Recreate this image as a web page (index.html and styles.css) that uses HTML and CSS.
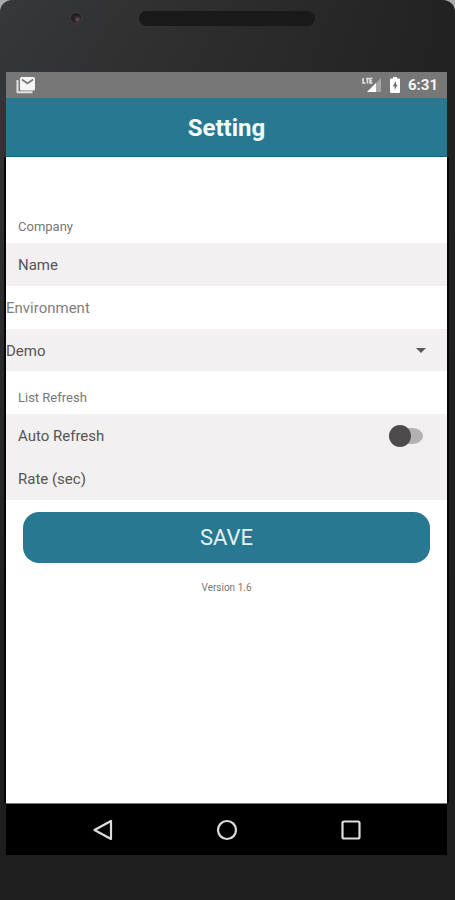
FILE: index.html
```html
<!DOCTYPE html>
<html lang="en">
<head>
<meta charset="utf-8">
<meta name="viewport" content="width=device-width, initial-scale=1">
<title>Setting</title>
<link rel="stylesheet" href="styles.css">
</head>
<body>
<div class="phone">
  <div class="bezel">
    <span class="camera"></span>
    <span class="speaker"></span>
  </div>
  <div class="status">
    <svg class="mail-icon" width="20" height="18" viewBox="0 0 20 18" aria-hidden="true">
      <path d="M1.500 4v12.200h15" fill="none" stroke="#e4e4e4" stroke-width="2" stroke-linejoin="round"/>
      <rect x="4" y="1" width="15" height="13.500" rx="1.500" fill="#f6f6f6"/>
      <path d="M6 3.500l5.500 4 5.500-4" fill="none" stroke="#777" stroke-width="1.600"/>
    </svg>
    <div class="status-right">
      <svg width="20" height="16" viewBox="0 0 20 16" aria-hidden="true">
        <path d="M19 1v14H5z" fill="#a5a5a5"/>
        <path d="M14 6v9H5z" fill="#fff"/>
        <path d="M1 1v5h2.500M4 1.500h3M5.500 1.500V6.500M10.500 1.500H8v4.500h2.500M8 3.700h2" fill="none" stroke="#e2e2e2" stroke-width="1.500"/>
      </svg>
      <svg width="10" height="16" viewBox="0 0 10 16" aria-hidden="true">
        <path d="M3 0h4v1.500h2q1 0 1 1V15q0 1-1 1H1q-1 0-1-1V2.500q0-1 1-1h2z" fill="#fff"/>
        <path d="M6 4L2.800 9.200h1.900V13L7.600 7.800H6z" fill="#6b6b6b"/>
      </svg>
      <span class="clock">6:31</span>
    </div>
  </div>
  <main class="screen">
    <header class="header"><h1>Setting</h1></header>
    <form class="form">
      <h2 class="caption">Company</h2>
      <div class="row">
        <label for="name">Name</label>
        <input class="field" id="name" type="text">
      </div>
      <label class="select-label" for="environment">Environment</label>
      <div class="select-row">
        <select id="environment"><option>Demo</option></select>
        <svg class="arrow" width="10" height="5" viewBox="0 0 10 5" aria-hidden="true"><path d="M0 0h10L5 5z" fill="#5a5a5a"/></svg>
      </div>
      <h2 class="caption">List Refresh</h2>
      <div class="row">
        <label for="auto">Auto Refresh</label>
        <input class="switch" id="auto" type="checkbox" role="switch">
      </div>
      <div class="row">
        <label for="rate">Rate (sec)</label>
        <input class="field" id="rate" type="text" inputmode="numeric">
      </div>
      <button class="save" type="button">SAVE</button>
      <p class="version">Version 1.6</p>
    </form>
  </main>
  <nav class="nav">
    <button type="button" aria-label="Back">
      <svg width="22" height="22" viewBox="0 0 22 22"><path d="M19 2v18L2.500 11z" fill="none" stroke="#ddd" stroke-width="2.200" stroke-linejoin="round"/></svg>
    </button>
    <button type="button" aria-label="Home">
      <svg width="22" height="22" viewBox="0 0 22 22"><circle cx="11" cy="11" r="9" fill="none" stroke="#ddd" stroke-width="2.200"/></svg>
    </button>
    <button type="button" aria-label="Recent apps">
      <svg width="22" height="22" viewBox="0 0 22 22"><rect x="2.500" y="2.500" width="17" height="17" rx="1.500" fill="none" stroke="#ddd" stroke-width="2.200"/></svg>
    </button>
  </nav>
</div>
</body>
</html>
```
FILE: styles.css
```css
* {
  box-sizing: border-box;
}

body {
  margin: 0;
  background: #aaa;
  font-family: Roboto, "Liberation Sans", sans-serif;
  color: #555;
}

.phone {
  display: flex;
  flex-direction: column;
  min-height: 100vh;
  padding: 0 8px 45px 6px;
  border-radius: 12px 12px 0 0;
  background:
    linear-gradient(#0000 0, #1e1e1e 700px),
    linear-gradient(90deg, #37383a, #2d2d2d 50%, #222);
}

.bezel {
  display: grid;
  grid-template-columns: 1fr 176px 1fr;
  align-items: center;
  height: 72px;
  padding-bottom: 36px;
}

.camera {
  width: 14px;
  height: 14px;
  margin-left: 8px;
  justify-self: center;
  border: 2px solid #3a3839;
  border-radius: 50%;
  background: radial-gradient(circle at 65% 65%, #65505b, #211d20 45%);
}

.speaker {
  height: 15px;
  border-radius: 8px;
  background: #191919;
}

.status {
  display: flex;
  align-items: center;
  justify-content: space-between;
  height: 26px;
  padding: 0 9px 0 10px;
  background: #777;
}

.status-right {
  display: flex;
  align-items: center;
  gap: 8px;
}

.clock {
  font-size: 15px;
  font-weight: 700;
  line-height: 26px;
  color: #f4f4f4;
}

.screen {
  display: flex;
  flex: 1;
  flex-direction: column;
  background: #fff;
  border-bottom: 1px solid #777;
}

.header {
  background: #287891;
  border-bottom: 1px solid #126580;
}

h1 {
  margin: 0;
  padding-top: 2px;
  font-size: 24px;
  font-weight: 700;
  line-height: 56px;
  text-align: center;
  color: #f4fbfd;
}

.form {
  display: flex;
  flex: 1;
  flex-direction: column;
  padding-top: 43px;
  box-shadow: -2px 0 #050505, 2px 0 #050505;
}

.caption {
  height: 43px;
  margin: 0;
  padding: 17px 12px 0;
  font-size: 13px;
  font-weight: 400;
  line-height: 20px;
  color: #777;
}

.row {
  display: flex;
  align-items: center;
  gap: 16px;
  height: 43px;
  padding: 0 24px 0 12px;
  background: #f2f0f1;
  font-size: 15px;
}

.row label,
.select-label {
  padding-top: 1px;
  line-height: 42px;
}

.field {
  flex: 1;
  min-width: 0;
  border: 0;
  outline: 0;
  background: none;
  font: inherit;
  color: inherit;
}

.select-label {
  font-size: 15px;
  color: #808080;
}

.select-row {
  display: grid;
  align-items: center;
  height: 42px;
  background: #f2f0f1;
}

.select-row > * {
  grid-area: 1 / 1;
}

select {
  width: 100%;
  height: 42px;
  padding: 2px 0 0;
  border: 0;
  appearance: none;
  background: none;
  font: inherit;
  font-size: 15px;
  color: #555;
}

.arrow {
  justify-self: end;
  margin-right: 21px;
  pointer-events: none;
}

.switch {
  display: flex;
  align-items: center;
  width: 34px;
  height: 22px;
  margin: 0 0 0 auto;
  padding: 3px 0;
  appearance: none;
  border-radius: 11px;
  background: #b3b1b2 content-box;
}

.switch::before {
  content: "";
  flex: none;
  width: 22px;
  height: 22px;
  border-radius: 50%;
  background: #4d4a4c;
}

.switch:checked::before {
  margin-left: 12px;
}

.save {
  height: 51px;
  margin: 12px 17px 0;
  border: 0;
  border-radius: 16px;
  background: #287891;
  font: inherit;
  font-size: 22px;
  color: #e4f1f5;
}

.version {
  margin: 15px 0;
  font-size: 10px;
  line-height: 20px;
  text-align: center;
  color: #777;
}

.nav {
  display: flex;
  justify-content: center;
  gap: 102px;
  height: 51px;
  background: #000;
}

.nav button {
  display: flex;
  align-items: center;
  padding: 0;
  border: 0;
  background: none;
}
```
